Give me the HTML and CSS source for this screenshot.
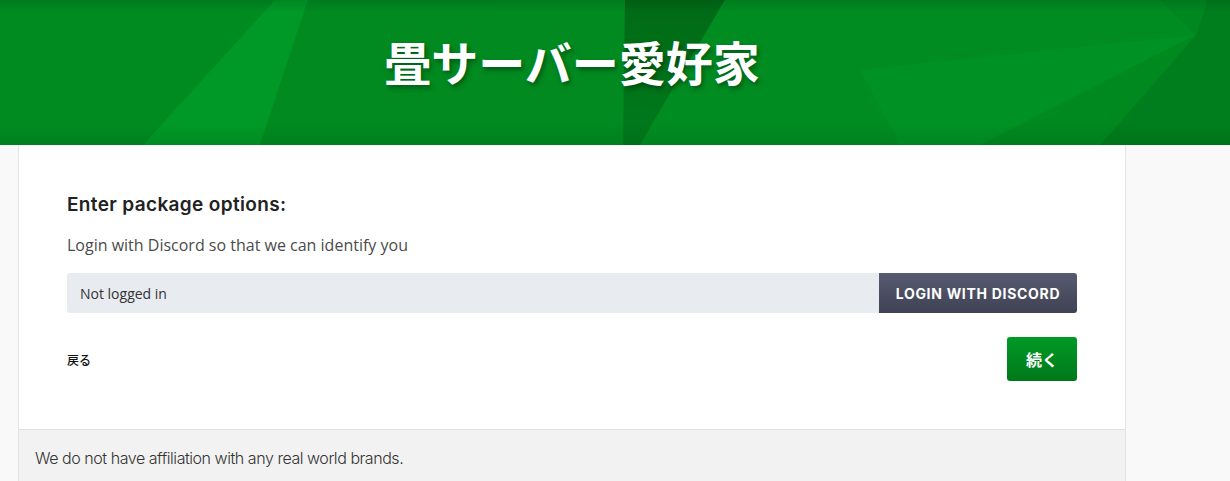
FILE: index.html
```html
<!DOCTYPE html>
<html lang="ja">
<head>
  <meta charset="UTF-8" />
  <meta name="viewport" content="width=device-width, initial-scale=1.0"/>
  <title>畳サーバー愛好家</title>
  <link rel="stylesheet" href="styles.css">
</head>
<body>
  <header class="site-header">
    <svg class="header-bg" viewBox="0 0 1230 145" preserveAspectRatio="none" aria-hidden="true">
      <defs>
        <linearGradient id="shade" x1="0" y1="0" x2="0" y2="1">
          <stop offset="0" stop-color="#000" stop-opacity="0.12"/>
          <stop offset="0.08" stop-color="#000" stop-opacity="0"/>
          <stop offset="0.85" stop-color="#000" stop-opacity="0"/>
          <stop offset="1" stop-color="#000" stop-opacity="0.08"/>
        </linearGradient>
        <linearGradient id="wedge" x1="0" y1="0" x2="0" y2="1">
          <stop offset="0" stop-color="#006a16"/>
          <stop offset="1" stop-color="#007a1b"/>
        </linearGradient>
      </defs>
      <rect width="1230" height="145" fill="#008b21"/>
      <polygon points="275,0 308,0 260,145 143,145" fill="#009826"/>
      <polygon points="308,0 625,0 625,145 260,145" fill="#008a20"/>
      <polygon points="625,0 725,0 640,145 623,145" fill="url(#wedge)"/>
      <polygon points="725,0 1160,0 1196,35 980,145 640,145" fill="#008c21"/>
      <polygon points="860,70 1196,35 980,145 900,145" fill="#009124"/>
      <polygon points="1160,0 1208,0 1196,35" fill="#008720"/>
      <polygon points="1208,0 1230,0 1230,145 1100,145 1196,35" fill="#007d1c"/>
      <polygon points="1196,35 1100,145 980,145" fill="#00891f"/>
      <rect width="1230" height="145" fill="url(#shade)"/>
    </svg>
    <div class="header-inner">
      <h1 class="site-title">畳サーバー愛好家</h1>
    </div>
  </header>

  <main class="page">
    <section class="panel">
      <h2>Enter package options:</h2>
      <p class="hint">Login with Discord so that we can identify you</p>

      <div class="input-group">
        <span class="status">Not logged in</span>
        <button class="btn-discord">LOGIN WITH DISCORD</button>
      </div>

      <div class="actions">
        <a href="#" class="back">戻る</a>
        <button class="btn-next">続く</button>
      </div>
    </section>

    <footer class="panel-footer">
      We do not have affiliation with any real world brands.
    </footer>
  </main>
</body>
</html>
```

FILE: styles.css
```css
body {
  margin: 0;
  background: #f9f9f9;
  font-family: "Open Sans", "Noto Sans CJK JP", sans-serif;
  color: #333;
  overflow: hidden;
}
.site-header {
  position: relative;
  height: 145px;
  overflow: hidden;
}
.header-bg {
  position: absolute;
  top: 0;
  left: 0;
  width: 100%;
  height: 100%;
}
.header-inner {
  position: relative;
  width: 1108px;
  margin-left: 18px;
  height: 100%;
  display: flex;
  align-items: center;
  justify-content: center;
}
.site-title {
  margin: 0 0 24px;
  font-family: "Noto Sans CJK JP", sans-serif;
  font-weight: 700;
  font-size: 47px;
  color: #fff;
  text-shadow: 2px 3px 5px rgba(0,0,0,0.35);
}
.page {
  width: 1108px;
  margin-left: 18px;
}
.panel {
  background: #fff;
  border-left: 1px solid #e1e5ea;
  border-right: 1px solid #e1e5ea;
  padding: 48px;
}
.panel h2 {
  margin: 0;
  font-family: Inter, sans-serif;
  font-weight: 600;
  font-size: 19px;
  line-height: 24px;
  color: #222;
  letter-spacing: 0.35px;
}
.hint {
  margin: 16px 0;
  font-size: 16px;
  line-height: 24px;
  color: #4b4b4b;
}
.input-group {
  display: flex;
  height: 40px;
  border-radius: 3px;
  overflow: hidden;
}
.status {
  flex: 1;
  display: flex;
  align-items: center;
  padding: 0 13px;
  background: #e8ebef;
  font-size: 14px;
  color: #333;
}
.btn-discord {
  width: 198px;
  border: none;
  background: linear-gradient(#575b70, #3f4253);
  color: #fff;
  font-family: Inter, sans-serif;
  font-weight: 700;
  font-size: 14px;
  letter-spacing: 0.7px;
  cursor: pointer;
}
.actions {
  margin-top: 24px;
  display: flex;
  justify-content: space-between;
  align-items: center;
}
.back {
  font-family: "Noto Sans CJK JP", sans-serif;
  font-size: 12px;
  font-weight: 500;
  color: #111;
  text-decoration: none;
}
.btn-next {
  width: 70px;
  height: 44px;
  border: none;
  border-radius: 3px;
  background: linear-gradient(#009a25, #00781a);
  color: #fff;
  font-family: "Noto Sans CJK JP", sans-serif;
  font-weight: 700;
  font-size: 16px;
  cursor: pointer;
}
.panel-footer {
  background: #f2f2f2;
  border-top: 1px solid #e2e2e2;
  border-left: 1px solid #e1e5ea;
  border-right: 1px solid #e1e5ea;
  padding: 16px 16px 11px;
  font-family: Inter, sans-serif;
  font-weight: 300;
  font-size: 16px;
  line-height: 24px;
  letter-spacing: -0.45px;
  color: #333;
}
```
